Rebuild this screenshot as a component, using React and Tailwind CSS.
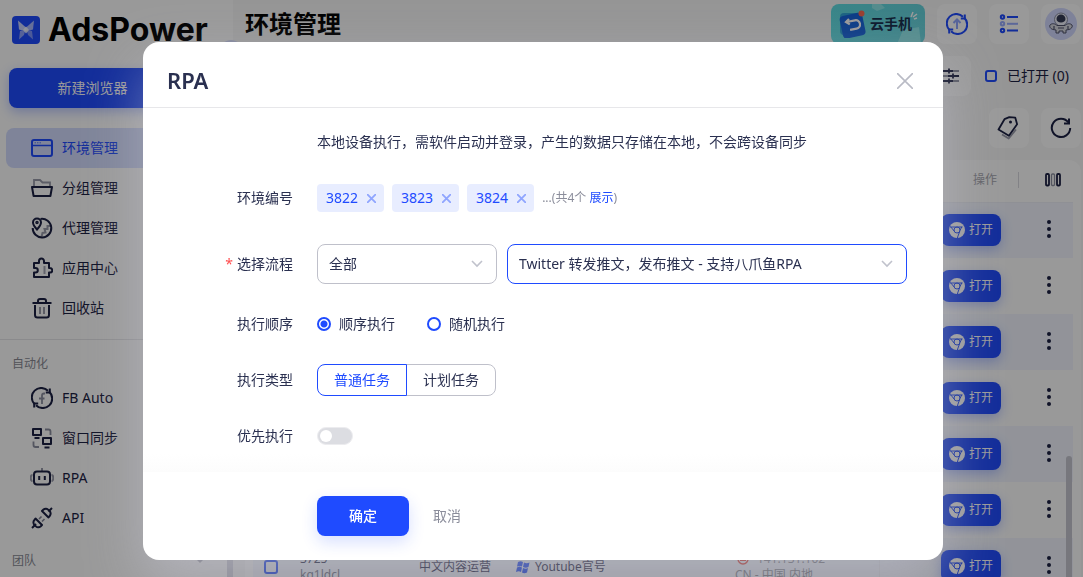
import { useState } from 'react';

const MENU = [
  { label: '环境管理', icon: WindowIcon, active: true },
  { label: '分组管理', icon: FolderIcon },
  { label: '代理管理', icon: ProxyIcon },
  { label: '应用中心', icon: PuzzleIcon },
  { label: '回收站', icon: TrashIcon },
];

const AUTOMATION = [
  { label: 'FB Auto', icon: FbAutoIcon },
  { label: '窗口同步', icon: SyncWindowsIcon },
  { label: 'RPA', icon: RobotIcon },
  { label: 'API', icon: PlugIcon },
];

const PROFILES = [
  { key: 1 },
  { key: 2 },
  { key: 3 },
  { key: 4 },
  { key: 5 },
  { key: 6 },
  { key: 7, id: '3725', account: 'kg1ldcl', group: '中文内容运营', name: 'Youtube官号', ip: '141.131.102', region: 'CN - 中国 内地' },
];

/* ---------- icons ---------- */

function Icon({ children, size = 'size-[22px]', className = '' }) {
  return (
    <svg viewBox="0 0 22 22" fill="none" stroke="currentColor" strokeWidth="2" className={`${size} shrink-0 ${className}`} aria-hidden="true">
      {children}
    </svg>
  );
}

function WindowIcon() {
  return (
    <Icon>
      <rect x="1" y="3" width="20" height="16" rx="2" />
      <path d="M1 8.5h20" strokeWidth="1.5" />
      <path d="M3.5 5.8h7" strokeWidth="1" strokeDasharray="1.5 1" opacity=".7" />
    </Icon>
  );
}

function FolderIcon() {
  return (
    <Icon>
      <path d="M3 9V3h6l2.5 2.5H19V9" strokeWidth="1.8" opacity=".45" />
      <path d="M1 10h20l-1.6 9H2.6z" strokeLinejoin="round" />
    </Icon>
  );
}

function ProxyIcon() {
  return (
    <Icon>
      <path d="M9.5 2a9.3 9.3 0 1 1-7.8 9" />
      <path d="M6 12.5C3.500 9.800 2 8 2 5.600a4 4 0 0 1 8 0c0 2.400-1.500 4.200-4 6.900z" />
      <circle cx="6" cy="5.600" r="1" strokeWidth="1.500" />
      <path d="M20 9h-3.500v3h-3l1 3.500-3 .5-1 4" opacity=".45" />
    </Icon>
  );
}

function PuzzleIcon() {
  return (
    <Icon>
      <path d="M3 6h5V4a2.500 2.500 0 0 1 5 0v2h5v5h1a2.300 2.300 0 0 1 0 4.600h-1V20H3v-4.500h1.500a2.300 2.300 0 0 0 0-4.600H3z" strokeLinejoin="round" />
      <path d="M13.500 9v8" opacity=".4" />
    </Icon>
  );
}

function TrashIcon() {
  return (
    <Icon>
      <path d="M1.500 6h19M7 5.500V4a2 2 0 0 1 2-2h4a2 2 0 0 1 2 2v1.500M4 8v10a2.500 2.500 0 0 0 2.500 2.500h9A2.500 2.500 0 0 0 18 18V8" />
      <path d="M9 10v7M13 10v7" opacity=".45" />
    </Icon>
  );
}

function FbAutoIcon() {
  return (
    <Icon>
      <path d="M3.500 17A9.300 9.300 0 0 1 17 3.800M18.500 5A9.300 9.300 0 0 1 5 18.200" />
      <path d="M18.800 1.500v4h-4M3.200 20.500v-4h4" />
      <path d="M14 6.500h-1a2 2 0 0 0-2 2V17M8 11.500h5.500" strokeWidth="1.800" opacity=".5" />
    </Icon>
  );
}

function SyncWindowsIcon() {
  return (
    <Icon>
      <path d="M2 2h8v6H2zM3.500 11h5M12 11h8v6h-8zM13.500 20.500h5" strokeLinejoin="round" />
      <path d="M14 2.500h3.500a2 2 0 0 1 2 2V8M2.500 14.500V18a2 2 0 0 0 2 2H8" strokeWidth="1.800" opacity=".5" />
    </Icon>
  );
}

function RobotIcon() {
  return (
    <Icon size="h-[22px] w-6 -mx-px">
      <path d="M11 1v3M1.500 8a1.500 2.500 0 0 0 0 6M20.500 8a1.500 2.500 0 0 1 0 6" opacity=".45" />
      <rect x="3" y="4.500" width="16" height="13" rx="3" />
      <path d="M8.200 9v4M13.800 9v4" />
    </Icon>
  );
}

function PlugIcon() {
  return (
    <Icon>
      <path d="M1 21l4-4M21 1l-3.500 3.500" />
      <path d="M4.500 11.500l6.500 6.500-1.500 1.500a3.500 3.500 0 0 1-5-.5l-.8-.8a3.500 3.500 0 0 1-.4-5zM17.500 10.500L11 4l1.500-1.500a3.500 3.500 0 0 1 5 .5l.8.800a3.500 3.500 0 0 1 .5 5z" strokeLinejoin="round" />
      <path d="M8 12l2.500-2.500M11 14.500l2.500-2.500" strokeWidth="1.600" opacity=".55" />
    </Icon>
  );
}

function ChromeIcon() {
  return (
    <svg viewBox="0 0 16 16" className="size-4 shrink-0" aria-hidden="true">
      <circle cx="8" cy="8" r="8" fill="#fff" />
      <g fill="none" stroke="#1f4bff" strokeWidth="1">
        <circle cx="8" cy="8" r="3" />
        <path d="M1 5H13.500M11 8.500L8.300 16M5.300 9.300L1.500 4.500M12.800 4.800L11.200 8" />
      </g>
      <circle cx="8" cy="8" r="2" fill="#fff" />
    </svg>
  );
}

function LogoMark() {
  return (
    <svg viewBox="0 0 28 28" className="size-7 shrink-0" aria-hidden="true">
      <rect width="28" height="28" rx="4" fill="#1f4bff" />
      <path d="M6 4.500l8 7v4l-7-2z" fill="#c9d3ff" />
      <path d="M22 4.500l-8 7v4l7-2z" fill="#aab9ff" />
      <path d="M8 15l5.500-1.500L12 19l-5 4.500z" fill="#8fa4ff" />
      <path d="M20 15l-5.500-1.500L16 19l5 4.500z" fill="#7d95ff" />
      <path d="M14 10.500l3 3.500-3 3.500-3-3.500z" fill="#fff" opacity=".8" />
    </svg>
  );
}

function AstronautIcon() {
  return (
    <svg viewBox="0 0 32 32" className="size-8" aria-hidden="true">
      <circle cx="16" cy="16" r="16" fill="#d3d9ff" />
      <circle cx="16" cy="11.500" r="6.500" fill="#eef0fa" stroke="#8b8fa5" strokeWidth="1" />
      <path d="M11.500 11a4.500 4.500 0 0 1 9 0c0 2.200-2 3.500-4.500 3.500s-4.500-1.300-4.500-3.500z" fill="#353b56" />
      <path d="M5 17c2-2 5-1.500 7 .5h8c2-2 5-2.500 7-.5 1 2-1 4-3 4.500l-3 .5v3h-3v-2h-4v2h-3v-3l-3-.5c-2-.5-4-2.500-3-4.500z" fill="#d6d7e0" stroke="#4d516a" strokeWidth="1" />
      <path d="M9 18v3M23 18v3M13 20h6" stroke="#4d516a" strokeWidth="1.200" />
    </svg>
  );
}

/* ---------- page behind the dialog ---------- */

function NavItem({ label, icon: NavIcon, active }) {
  return (
    <a
      href="#"
      className={`flex h-10 items-center gap-[9px] rounded-lg pl-[25px] text-sm ${active ? 'bg-[#d4ddff] text-[#1f4bff]' : 'text-[#1c2144]'}`}
    >
      <NavIcon />
      {label}
    </a>
  );
}

function Sidebar() {
  return (
    <aside className="relative w-[233px] shrink-0 bg-white">
      <div className="mt-4 flex h-7 items-center gap-2 pl-3">
        <LogoMark />
        <span className="font-['Inter',sans-serif] text-[32px] leading-7 font-bold text-black">AdsPower</span>
      </div>
      <div className="mx-[9px] mt-6 flex h-10 rounded-lg bg-[#1f4bff] text-sm text-white shadow-[0_4px_12px_rgba(31,75,255,0.3)]">
        <button type="button" className="w-[167px]">新建浏览器</button>
      </div>
      <nav className="mx-1.5 mt-5">
        {MENU.map(item => <NavItem key={item.label} {...item} />)}
      </nav>
      <div className="mt-[11px] border-t border-[#e6e6e9]" />
      <p className="mt-3.5 mb-1 pl-3 text-xs leading-5 text-[#8a8b95]">自动化</p>
      <nav className="mx-1.5">
        {AUTOMATION.map(item => <NavItem key={item.label} {...item} />)}
      </nav>
      <div className="mt-[13px] flex items-center justify-between pr-7 pl-3 text-xs leading-5 text-[#8a8b95]">
        团队
        <svg viewBox="0 0 10 6" className="h-1.5 w-2.5" aria-hidden="true"><path d="M1 1h8L5 5z" fill="#b4b5c0" /></svg>
      </div>
      <div className="absolute right-0 bottom-0 h-24 w-1.5 bg-[#d2d2de]" />
      <span className="absolute top-10 -right-2.5 size-6 rounded-full bg-[#d9dfff]" />
    </aside>
  );
}

function IconButton({ label, children }) {
  return (
    <button type="button" aria-label={label} className="flex size-10 shrink-0 items-center justify-center rounded-lg bg-white text-[#1c2144]">
      {children}
    </button>
  );
}

function TopBar() {
  return (
    <header className="flex h-10 items-center gap-3">
      <h1 className="mr-auto text-2xl font-bold text-black">环境管理</h1>
      <button type="button" className="relative flex h-10 w-[94px] items-center gap-[3px] overflow-hidden rounded-lg bg-linear-to-r from-[#5fdde2] to-[#66d3dc] pl-2 text-sm font-bold text-[#142a4a]">
        <svg viewBox="0 0 94 40" className="absolute inset-0 size-full" aria-hidden="true">
          <path d="M41 0h9l4 4-8 3-5-3zM72 26l16-3 2 17H66z" fill="#8ce8ea" />
          <path d="M80 13l2-5M82 13l4-3M83 15l3-1" stroke="#fff" strokeWidth="1.500" />
        </svg>
        <svg viewBox="0 0 28 28" className="relative size-7" aria-hidden="true">
          <rect x="1" y="3" width="22" height="22" rx="4" fill="#2fa5d8" />
          <rect x="2" y="4" width="23" height="23" rx="4" fill="#1463dd" transform="rotate(-12 14 15)" />
          <path d="M10 9l-3 3 3.800 2.400M7.500 12l8.500-1.700a4.200 4.200 0 0 1 1.600 8.300l-6.500 1.200" fill="none" stroke="#fff" strokeWidth="2.200" />
          <circle cx="22.500" cy="3.500" r="3" fill="#ff6a4f" />
        </svg>
        <span className="relative">云手机</span>
      </button>
      <IconButton label="更新">
        <Icon className="text-[#1f4bff]">
          <path d="M3.500 17A9.300 9.300 0 0 1 17 3.800M18.500 5A9.300 9.300 0 0 1 5 18.200" />
          <path d="M18.800 1.500v4h-4M3.200 20.500v-4h4" />
          <path d="M11 16V6.500M7.500 10L11 6.500l3.500 3.500" opacity=".5" />
        </Icon>
      </IconButton>
      <IconButton label="任务列表">
        <Icon className="text-[#1f4bff]">
          <circle cx="4.500" cy="4" r="1.700" />
          <path d="M9 4h11M9 17.500h11" />
          <g opacity=".45"><circle cx="4.500" cy="10.800" r="1.700" /><path d="M9 10.800h11" /></g>
          <circle cx="4.500" cy="17.500" r="1.700" />
        </Icon>
      </IconButton>
      <IconButton label="账号"><AstronautIcon /></IconButton>
    </header>
  );
}

function Toolbar() {
  return (
    <>
      <div className="mt-3 flex h-10 items-center justify-end pr-3">
        <IconButton label="筛选">
          <svg viewBox="0 0 16 16" className="size-4" fill="none" stroke="currentColor" strokeWidth="1.800" aria-hidden="true">
            <path d="M0 3h10M0 13h10M5 8h11M6 .5v5M10 5.500v5M6 10.500v5" />
            <path d="M10 3h6M0 8h5M10 13h6" opacity=".5" />
          </svg>
        </IconButton>
        <label className="ml-3.5 flex items-center gap-2.5 text-sm text-[#1c2144]">
          <input type="checkbox" className="size-3 appearance-none rounded-[3px] border-2 border-[#1f4bff]" />
          已打开 (0)
        </label>
      </div>
      <div className="mt-3 flex h-10 justify-end gap-3">
        <IconButton label="标签">
          <svg viewBox="0 0 24 24" className="size-6" fill="none" stroke="currentColor" strokeWidth="1.800" strokeLinejoin="round" aria-hidden="true">
            <path d="M12.300 1.200l6 .5 1.800 6.500-8.200 11.500L1.500 13.500 7.500 3.200z" />
            <circle cx="13.500" cy="6" r=".8" strokeWidth="1.400" />
            <path d="M5 18.500l6.700 4 7.300-9" opacity=".45" />
          </svg>
        </IconButton>
        <IconButton label="刷新">
          <Icon>
            <path d="M18.500 5.500A9.200 9.200 0 1 0 20.200 11" />
            <path d="M19 1.500v5h-5" />
          </Icon>
        </IconButton>
      </div>
    </>
  );
}

function ProfileRow({ profile }) {
  return (
    <tr className="h-14 odd:bg-[#f3f6ff]">
      <td className="text-center">
        <input type="checkbox" aria-label="选择环境" className="size-3.5 appearance-none rounded-[3px] border-2 border-[#1f4bff] align-middle" />
      </td>
      <td className="pt-0.5 pl-[11px] leading-4">
        {profile.id}
        <br />
        <span className="text-[#6b6e80]">{profile.account}</span>
      </td>
      <td className="pt-0.5 pl-[11px]">{profile.group}</td>
      <td className="pt-0.5 pl-[11px]">
        {profile.name && (
          <span className="flex items-center gap-[5px]">
            <svg viewBox="0 0 14 14" className="size-3.5" fill="#1f4bff" aria-hidden="true">
              <path d="M2 2c2-1 3-1 5 0L6 6.500C4.500 6 3 6 1 6.500zM8 2.500c2 1 3.500 1 5.500 0l-1 4.500c-2 1-3.500 1-5.500 0zM1 7.500c2-1 3.200-.8 5 0L5 12c-1.500-1-3-1-5 0zM7 8c2 1 3.500 1 5 0l-1 4.500c-2 1-3.500 1-5 0z" />
            </svg>
            {profile.name}
          </span>
        )}
      </td>
      <td className="pt-0.5 pl-[11px] leading-4 text-[#8a8b95]">
        {profile.ip && (
          <span className="flex items-center gap-2">
            <svg viewBox="0 0 12 12" className="ml-0.5 size-3" aria-hidden="true">
              <circle cx="6" cy="6" r="5" fill="none" stroke="#e8453c" strokeWidth="1.500" />
              <path d="M3 7h6" stroke="#e8453c" strokeWidth="2" />
            </svg>
            {profile.ip}
          </span>
        )}
        {profile.region}
      </td>
      <td className="border-l border-[#ebecf2] pr-6">
        <button type="button" className="ml-auto flex h-8 w-[60px] items-center justify-center gap-1 rounded-lg bg-[#1f4bff] text-xs text-white shadow-[0_4px_12px_rgba(31,75,255,0.3)]">
          <ChromeIcon />
          打开
        </button>
      </td>
      <td className="pb-0.5">
        <button type="button" aria-label="更多" className="mx-auto flex flex-col gap-[3px]">
          <span className="size-1 rounded-full bg-[#1c2144]" />
          <span className="size-1 rounded-full bg-[#1c2144]" />
          <span className="size-1 rounded-full bg-[#1c2144]" />
        </button>
      </td>
    </tr>
  );
}

function ProfileTable() {
  return (
    <section className="relative mt-3 min-h-0 flex-1 overflow-hidden rounded-t-xl bg-white px-2">
      <table className="w-full table-fixed text-xs text-[#1c2144]">
        <colgroup>
          <col className="w-9" />
          <col className="w-[119px]" />
          <col className="w-[97px]" />
          <col />
          <col className="w-[155px]" />
          <col className="w-[146px]" />
          <col className="w-12" />
        </colgroup>
        <thead>
          <tr className="h-[42px] border-b border-[#eef0f8]">
            <th colSpan={5} />
            <th className="pb-0.5 text-right font-normal text-[#a5a6ae]">
              <span className="flex items-center justify-end gap-[21px] pr-1.5">
                操作
                <span className="h-4 w-px bg-[#d9d9e0]" />
              </span>
            </th>
            <th className="pb-0.5">
              <svg viewBox="0 0 16 14" className="ml-5 h-3.5 w-4" fill="none" stroke="currentColor" strokeWidth="1.800" aria-hidden="true">
                <rect x="1" y="1" width="3" height="11.500" rx="1" />
                <rect x="6.500" y="1" width="3" height="11.500" rx="1" opacity=".5" strokeWidth="1.300" />
                <rect x="12" y="1" width="3" height="11.500" rx="1" />
              </svg>
            </th>
          </tr>
        </thead>
        <tbody>
          {PROFILES.map(profile => <ProfileRow key={profile.key} profile={profile} />)}
        </tbody>
      </table>
      <div className="absolute right-[9px] bottom-0 h-[121px] w-1.5 rounded-t-full bg-[#c6c7d0]" />
    </section>
  );
}

/* ---------- dialog ---------- */

function FormRow({ label, htmlFor, required, className, children }) {
  const Label = htmlFor ? 'label' : 'span';
  return (
    <div className={`flex items-center gap-6 ${className}`}>
      <Label htmlFor={htmlFor} className="w-[150px] shrink-0 text-right">
        {required && <span className="mr-1 text-[#ff4d4f]">*</span>}
        {label}
      </Label>
      {children}
    </div>
  );
}

function Select({ id, label, options, className }) {
  return (
    <div className={`relative ${className}`}>
      <select id={id} aria-label={label} className="size-full appearance-none rounded-lg border border-inherit bg-white pr-8 pl-[11px] text-sm">
        {options.map(option => <option key={option}>{option}</option>)}
      </select>
      <svg viewBox="0 0 12 8" className="pointer-events-none absolute top-4 right-3.5 h-2 w-3" fill="none" stroke="#c0c2cc" strokeWidth="1.600" aria-hidden="true">
        <path d="M1 1l5 5 5-5" />
      </svg>
    </div>
  );
}

function RpaDialog() {
  const [tags, setTags] = useState(['3822', '3823', '3824']);
  const [order, setOrder] = useState('顺序执行');
  const [type, setType] = useState('普通任务');
  const [priority, setPriority] = useState(false);

  return (
    <div
      role="dialog"
      aria-label="RPA"
      className="w-full max-w-[800px] rounded-[16px] bg-white text-sm text-[#2a3050] shadow-[0_24px_56px_rgba(210,210,228,0.45)]"
    >
      <div className="flex h-[66px] items-center justify-between border-b border-[#e7e7ea] pt-3 pr-[30px] pl-6">
        <h2 className="text-[22px] font-semibold">RPA</h2>
        <button type="button" aria-label="关闭">
          <svg viewBox="0 0 16 16" className="size-4" stroke="#b9bbc5" strokeWidth="1.600" aria-hidden="true">
            <path d="M0 0l16 16M16 0L0 16" />
          </svg>
        </button>
      </div>

      <div className="bg-linear-to-b from-white from-95% to-[#fcfcfc] pt-6 pb-5">
        <p className="pl-[174px] leading-5">本地设备执行，需软件启动并登录，产生的数据只存储在本地，不会跨设备同步</p>

        <FormRow label="环境编号" className="mt-8">
          <div className="flex items-center gap-2">
            {tags.map(tag => (
              <span key={tag} className="flex h-7 items-center gap-[9px] rounded bg-[#e8edff] pr-2 pl-[9px] text-[#1f4bff]">
                {tag}
                <button type="button" aria-label={`移除 ${tag}`} onClick={() => setTags(tags.filter(t => t !== tag))}>
                  <svg viewBox="0 0 9 9" className="size-[9px]" stroke="#8fa5ff" strokeWidth="1.800" aria-hidden="true">
                    <path d="M0 0l9 9M9 0L0 9" />
                  </svg>
                </button>
              </span>
            ))}
            <span className="text-xs text-[#8b8d9b]">
              ...(共4个 <a href="#" className="text-[#1f4bff]">展示</a>)
            </span>
          </div>
        </FormRow>

        <FormRow label="选择流程" htmlFor="flow-group" required className="mt-8">
          <div className="flex flex-1 gap-2.5 pr-9">
            <Select id="flow-group" options={['全部']} className="h-10 w-[180px] border-[#bfc0ca]" />
            <Select id="flow" label="流程" options={['Twitter 转发推文，发布推文 - 支持八爪鱼RPA']} className="h-10 flex-1 border-[#1f4bff]" />
          </div>
        </FormRow>

        <FormRow label="执行顺序" className="mt-6 h-8">
          <div className="flex gap-8">
            {['顺序执行', '随机执行'].map(option => (
              <label key={option} className="flex items-center gap-2">
                <input
                  type="radio"
                  name="order"
                  checked={order === option}
                  onChange={() => setOrder(option)}
                  className="size-3.5 appearance-none rounded-full border-2 border-[#1f4bff] checked:bg-[radial-gradient(circle,#1f4bff_3px,#fff_4px)]"
                />
                {option}
              </label>
            ))}
          </div>
        </FormRow>

        <FormRow label="执行类型" className="mt-6 h-8">
          <div className="flex">
            {['普通任务', '计划任务'].map(option => (
              <button
                key={option}
                type="button"
                onClick={() => setType(option)}
                className={`h-8 w-[90px] border first:rounded-l-lg last:-ml-px last:rounded-r-lg ${type === option ? 'z-10 border-[#1f4bff] text-[#1f4bff]' : 'border-[#bfc0ca]'}`}
              >
                {option}
              </button>
            ))}
          </div>
        </FormRow>

        <FormRow label="优先执行" htmlFor="priority" className="mt-6 h-8">
          <span className="relative flex">
            <input
              id="priority"
              type="checkbox"
              role="switch"
              checked={priority}
              onChange={e => setPriority(e.target.checked)}
              className="peer h-[18px] w-9 appearance-none rounded-full border border-[#ececef] bg-[#dcdde2] checked:bg-[#1f4bff]"
            />
            <span className="pointer-events-none absolute top-[3px] left-[3px] size-3 rounded-full bg-white peer-checked:left-[21px]" />
          </span>
        </FormRow>
      </div>

      <div className="flex items-center gap-6 pt-6 pb-6 pl-[174px]">
        <button type="button" className="h-10 w-[92px] rounded-lg bg-[#1f4bff] font-medium text-white shadow-[0_6px_16px_rgba(31,75,255,0.18)]">确定</button>
        <button type="button" className="text-[#8b8d9b]">取消</button>
      </div>
    </div>
  );
}

export default function App() {
  return (
    <div className="flex h-screen overflow-hidden bg-[#f8f8f8] font-['Noto_Sans','Noto_Sans_CJK_SC',sans-serif]">
      <Sidebar />
      <main className="flex min-w-0 flex-1 flex-col pt-1 pr-0.5 pl-3">
        <TopBar />
        <Toolbar />
        <ProfileTable />
      </main>
      <div className="fixed inset-0 z-20 flex items-start justify-center overflow-hidden bg-black/40 pt-[42px] pl-[3px]">
        <RpaDialog />
      </div>
    </div>
  );
}
